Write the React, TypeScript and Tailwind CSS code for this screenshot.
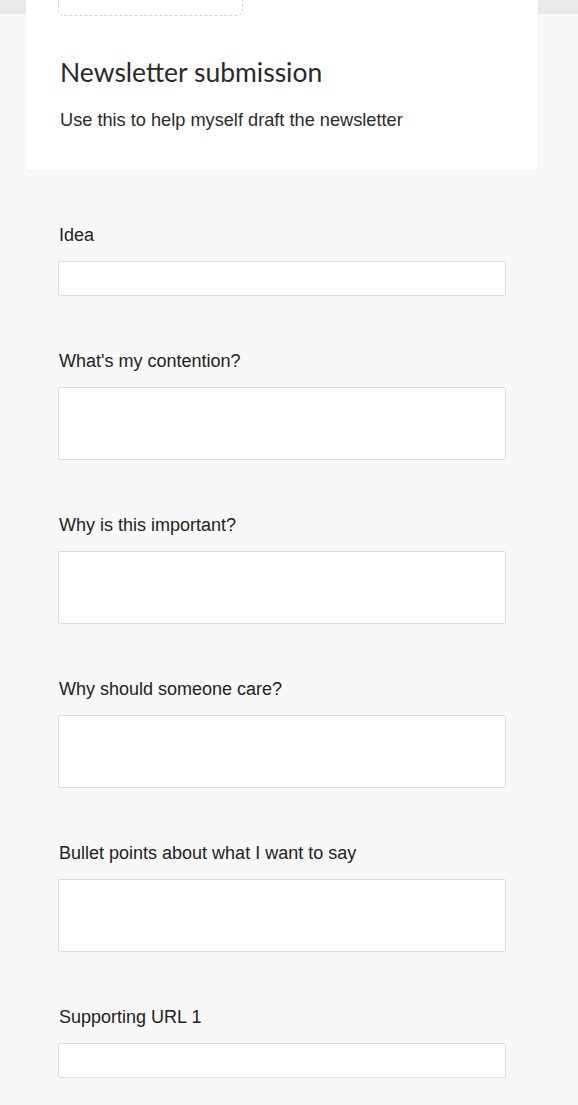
export default function App() {
  const fields = [
    { label: "Idea", multiline: false },
    { label: "What's my contention?", multiline: true },
    { label: "Why is this important?", multiline: true },
    { label: "Why should someone care?", multiline: true },
    { label: "Bullet points about what I want to say", multiline: true },
    { label: "Supporting URL 1", multiline: false },
  ]

  return (
    <main className="min-h-screen bg-[#f8f8f8] font-['Liberation_Sans',Arial,sans-serif] text-[#222]">
      <div className="h-[14px] bg-[#e9e9e9]" />
      <div className="ml-[26px] -mt-[14px] w-[512px]">
        <div className="overflow-hidden rounded-b-[3px] bg-white px-[32px] pb-[38px] shadow-[0_1px_2px_rgba(0,0,0,0.03)]">
          <div className="-mt-[40px] h-[56px] w-[185px] rounded-[6px] border border-dashed border-[#d4d4d4]" />
          <h1 className="mt-[40px] ml-[2px] font-['Lato',sans-serif] text-[26.5px] leading-[32px] text-[#2a2a2a]">
            Newsletter submission
          </h1>
          <p className="mt-[20px] ml-[2px] text-[18.2px] leading-[24px] text-[#2b2b2b]">
            Use this to help myself draft the newsletter
          </p>
        </div>

        <form className="px-[32px] pb-[60px]">
          {fields.map((f) => (
            <div key={f.label} className="mt-[53px]">
              <label className="ml-[1px] block text-[18px] leading-[24px] text-[#222]">{f.label}</label>
              {f.multiline ? (
                <textarea className="mt-[14px] block h-[73px] w-full resize-none rounded-[2px] border border-[#dcdcdc] bg-white" />
              ) : (
                <input className="mt-[14px] block h-[35px] w-full rounded-[2px] border border-[#dcdcdc] bg-white" />
              )}
            </div>
          ))}
        </form>
      </div>
    </main>
  )
}
